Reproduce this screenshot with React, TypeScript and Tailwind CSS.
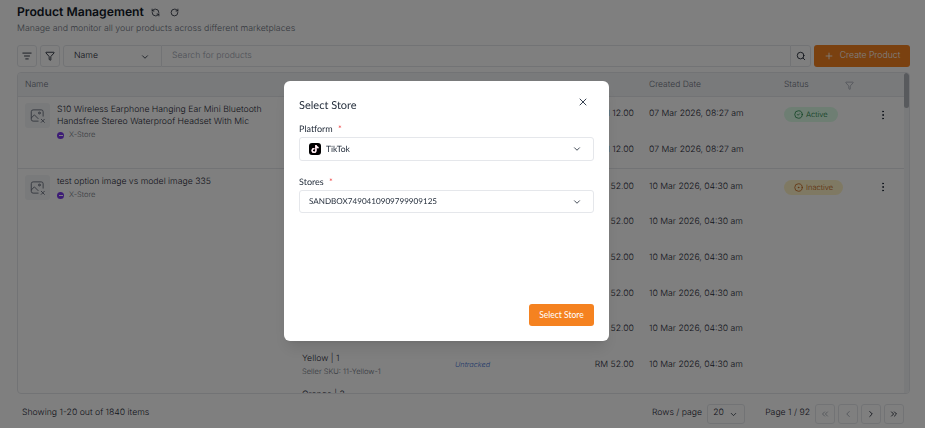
import React from 'react';
import {
  ChevronDown, ChevronLeft, ChevronRight, ChevronsLeft, ChevronsRight, CircleCheck, CircleDot,
  EllipsisVertical, Funnel, ListFilter, Plus, RefreshCcw, RotateCw, Search, X,
} from 'lucide-react';
import { FaTiktok } from 'react-icons/fa';

type Variant = { name: string; sku: string; price: string; date: string };
type Product = { id: number; title: string[]; status: 'Active' | 'Inactive'; variants: Variant[] };

const products: Product[] = [
  {
    id: 1,
    title: ['S10 Wireless Earphone Hanging Ear Mini Bluetooth', 'Handsfree Stereo Waterproof Headset With Mic'],
    status: 'Active',
    variants: [
      { name: 'Black | 1', sku: '10-Black-1', price: 'RM 12.00', date: '07 Mar 2026, 08:27 am' },
      { name: 'White | 1', sku: '10-White-1', price: 'RM 12.00', date: '07 Mar 2026, 08:27 am' },
    ],
  },
  {
    id: 2,
    title: ['test option image vs model image 335'],
    status: 'Inactive',
    variants: [
      { name: 'Red | 1', sku: '11-Red-1', price: 'RM 52.00', date: '10 Mar 2026, 04:30 am' },
      { name: 'Red | 2', sku: '11-Red-2', price: 'RM 52.00', date: '10 Mar 2026, 04:30 am' },
      { name: 'Red | 3', sku: '11-Red-3', price: 'RM 52.00', date: '10 Mar 2026, 04:30 am' },
      { name: 'Blue | 1', sku: '11-Blue-1', price: 'RM 52.00', date: '10 Mar 2026, 04:30 am' },
      { name: 'Blue | 2', sku: '11-Blue-2', price: 'RM 52.00', date: '10 Mar 2026, 04:30 am' },
      { name: 'Yellow | 1', sku: '11-Yellow-1', price: 'RM 52.00', date: '10 Mar 2026, 04:30 am' },
      { name: 'Orange | 3', sku: '11-Orange-3', price: 'RM 52.00', date: '10 Mar 2026, 04:30 am' },
    ],
  },
];

const NoImage = () => (
  <svg width="15" height="15" viewBox="0 0 24 24" fill="none" stroke="currentColor" strokeWidth="1.5" strokeLinecap="round" strokeLinejoin="round">
    <path d="M13 21H5a3 3 0 0 1-3-3V6a3 3 0 0 1 3-3h13a3 3 0 0 1 3 3v7" />
    <circle cx="15" cy="8" r="1.5" />
    <path d="M2 16l5-5 6 6" />
    <path d="M18 18l5 5M23 18l-5 5" />
  </svg>
);

const PageButton = ({ children, dim }: { children: React.ReactNode; dim?: boolean }) => (
  <button className={`flex h-[20px] w-[20px] items-center justify-center rounded-[3px] border border-[#e5e7eb] ${dim ? 'text-[#9ca3af]' : 'text-[#111827]'}`}>
    {children}
  </button>
);

const ProductRow = ({ product }: { product: Product }) => (
  <div className="flex border-b border-[#e5e7eb]">
    <div className="flex w-[284px] shrink-0 gap-[7px] pl-[7px] pt-[6px]">
      <div className="flex h-[25px] w-[25px] shrink-0 items-center justify-center rounded-[3px] bg-[#f3f4f6] text-[#6b7280]">
        <NoImage />
      </div>
      <div className="pt-[1px]">
        {product.title.map(line => (
          <div key={line} className="whitespace-nowrap text-[8.7px] leading-[12px] text-[#1f2937]">{line}</div>
        ))}
        <div className="flex items-center gap-[5px] text-[7.5px] leading-[14px] text-[#6b7280]">
          <span className="flex h-[7px] w-[7px] items-center justify-center rounded-full bg-[#7c3aed]">
            <span className="h-[1px] w-[4px] bg-white" />
          </span>
          X-Store
        </div>
      </div>
    </div>
    <div className="flex-1">
      {product.variants.map((v, i) => (
        <div key={v.sku} className="flex h-[35.7px] items-center">
          <div className="w-[153px] shrink-0">
            <div className="text-[8.7px] leading-[13px] text-[#1f2937]">{v.name}</div>
            <div className="text-[7.5px] leading-[12px] text-[#6b7280]">Seller SKU: {v.sku}</div>
          </div>
          <div className="w-[60px] shrink-0 text-[7.3px] italic text-[#3b6fd4]">Untracked</div>
          <div className="w-[119px] shrink-0 text-right text-[8.7px] text-[#1f2937]">{v.price}</div>
          <div className="ml-[15px] w-[135px] shrink-0 text-[8.7px] text-[#1f2937]">{v.date}</div>
          <div className="w-[93px] shrink-0">
            {i === 0 && product.status === 'Active' && (
              <span className="flex h-[15px] w-[54px] items-center gap-[3px] rounded-full bg-[#dcfce7] pl-[10px] text-[7.5px] text-[#15803d]">
                <CircleCheck size={9} /> Active
              </span>
            )}
            {i === 0 && product.status === 'Inactive' && (
              <span className="flex h-[15px] w-[59px] items-center gap-[3px] rounded-full bg-[#fef3c7] pl-[10px] text-[7.5px] text-[#c2570c]">
                <CircleDot size={9} /> Inactive
              </span>
            )}
          </div>
          {i === 0 && <EllipsisVertical size={12} className="text-[#1f2937]" />}
        </div>
      ))}
    </div>
  </div>
);

export default function App() {
  return (
    <div className="flex h-[428px] w-[925px] flex-col overflow-hidden bg-white pl-[17px] pr-[15px] font-['Inter',sans-serif] font-light [text-rendering:geometricPrecision]">
      <div className="mt-[4px] flex h-[16px] items-center">
        <h1 className="text-[12.2px] font-semibold leading-[16px] text-[#111827]">Product Management</h1>
        <RefreshCcw size={9} className="ml-[7px] text-[#111827]" />
        <RotateCw size={9} className="ml-[10px] text-[#111827]" />
      </div>
      <p className="mt-[1px] text-[8.8px] leading-[16px] text-[#6b7280]">Manage and monitor all your products across different marketplaces</p>

      <div className="mt-[8px] flex h-[22px] items-stretch">
        <button className="flex w-[20px] items-center justify-center rounded-[3px] border border-[#e5e7eb] text-[#111827]"><ListFilter size={10} /></button>
        <button className="ml-[3px] flex w-[20px] items-center justify-center rounded-[3px] border border-[#e5e7eb] text-[#111827]"><Funnel size={10} /></button>
        <div className="ml-[3px] flex w-[99px] items-center justify-between rounded-l-[3px] border border-[#e5e7eb] pl-[10px] pr-[11px] pt-[1px] text-[8.7px] text-[#1f2937]">
          Name <ChevronDown size={10} />
        </div>
        <div className="flex flex-1 items-center border-y border-[#e5e7eb] pl-[10px] pt-[1px] text-[8.7px] text-[#9ca3af]">Search for products</div>
        <button className="flex w-[21px] items-center justify-center rounded-r-[3px] border border-[#e5e7eb] text-[#111827]"><Search size={10} /></button>
        <button className="ml-[3px] flex w-[96px] items-center justify-center gap-[6px] rounded-[3px] bg-[#f58220] text-[8.7px] text-white"><Plus size={10} /> Create Product</button>
      </div>

      <div className="relative mt-[5px] flex h-[322px] flex-col overflow-hidden rounded-[4px] border border-[#e5e7eb]">
        <div className="flex h-[24px] shrink-0 items-center border-b border-[#e5e7eb] bg-[#f3f4f6] pl-[7px] pt-[2px] text-[8.5px] text-[#6b7280]">
          <span className="w-[624px] shrink-0">Name</span>
          <span className="w-[135px] shrink-0">Created Date</span>
          <span className="w-[61px] shrink-0">Status</span>
          <Funnel size={9} className="text-[#9ca3af]" />
        </div>
        {products.map(p => <ProductRow key={p.id} product={p} />)}
        <div className="absolute right-0 top-0 h-full w-[5px] bg-[#f3f4f6]">
          <div className="h-[35px] w-[5px] rounded-full bg-[#b0b4ba]" />
        </div>
      </div>

      <div className="flex flex-1 items-center justify-between pl-[5px] pr-[6px] pt-[6px] text-[8.7px] text-[#1f2937]">
        <span>Showing 1-20 out of 1840 items</span>
        <div className="flex items-center">
          <span>Rows / page</span>
          <div className="ml-[5px] flex h-[20px] w-[38px] items-center justify-between rounded-[3px] border border-[#e5e7eb] pl-[5px] pr-[6px]">20 <ChevronDown size={9} /></div>
          <span className="ml-[20px]">Page 1 / 92</span>
          <div className="ml-[5px] flex gap-[3px]">
            <PageButton dim><ChevronsLeft size={10} /></PageButton>
            <PageButton dim><ChevronLeft size={10} /></PageButton>
            <PageButton><ChevronRight size={10} /></PageButton>
            <PageButton><ChevronsRight size={10} /></PageButton>
          </div>
        </div>
      </div>

      {/* Select store dialog */}
      <div className="fixed inset-0 flex items-start justify-center bg-black/50 pt-[81px] pr-[32px] font-['Lato',sans-serif] font-normal">
        <div className="flex h-[260px] w-[325px] flex-col rounded-[6px] bg-white px-[15px] shadow-lg">
          <div className="mt-[15px] flex items-start justify-between">
            <h2 className="pt-[1px] text-[11px] leading-[17px] text-[#1f2937]">Select Store</h2>
            <X size={12} className="mr-[5px] text-[#374151]" />
          </div>
          <label className="mt-[8px] text-[9px] leading-[14px] text-[#1f2937]">Platform <span className="ml-[3px] text-[#ef4444]">*</span></label>
          <div className="mt-[1px] flex h-[24px] items-center justify-between rounded-[3px] border border-[#e5e7eb] pl-[9px] pr-[11px] text-[8.6px] text-[#1f2937]">
            <span className="flex items-center gap-[5px]">
              <span className="relative flex h-[12px] w-[12px] items-center justify-center rounded-[3px] bg-black text-white">
                <FaTiktok size={8} className="absolute left-[1.6px] top-[1.6px] text-[#25f4ee]" />
                <FaTiktok size={8} className="absolute left-[2.4px] top-[2.4px] text-[#fe2c55]" />
                <FaTiktok size={8} className="relative" />
              </span>
              TikTok
            </span>
            <ChevronDown size={10} />
          </div>
          <label className="mt-[14px] text-[9px] leading-[14px] text-[#1f2937]">Stores <span className="ml-[3px] text-[#ef4444]">*</span></label>
          <div className="mt-[1px] flex h-[23px] items-center justify-between rounded-[3px] border border-[#e5e7eb] pl-[9px] pr-[11px] text-[8.1px] text-[#1f2937]">
            SANDBOX7490410909799909125
            <ChevronDown size={10} />
          </div>
          <div className="mt-auto mb-[15px] flex justify-end">
            <button className="h-[22px] w-[65px] rounded-[3px] bg-[#f58220] text-[8.5px] text-white">Select Store</button>
          </div>
        </div>
      </div>
    </div>
  );
}
